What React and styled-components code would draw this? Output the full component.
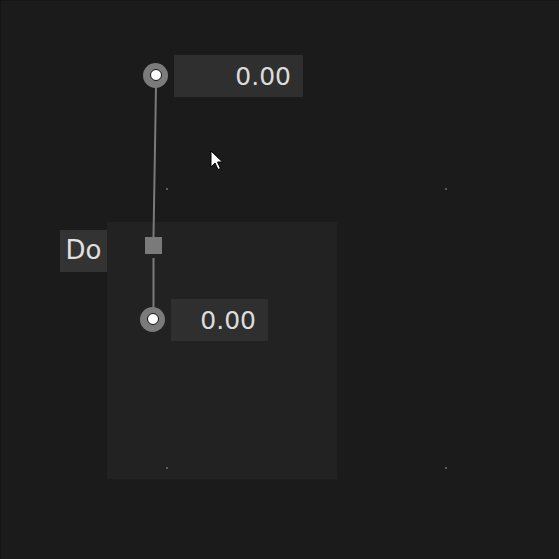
import React from 'react';
import styled, { createGlobalStyle } from 'styled-components';

const Global = createGlobalStyle`
  html, body { margin: 0; padding: 0; background: #1b1b1b; }
  body { font-family: "DejaVu Sans", Verdana, sans-serif; }
`;

const Canvas = styled.div`
  position: relative;
  width: 559px;
  height: 559px;
  overflow: hidden;
  background: #1b1b1b;
  box-shadow: inset 1px 1px 0 #151515;
`;

const Panel = styled.div`
  position: absolute;
  left: ${(p) => p.x}px;
  top: ${(p) => p.y}px;
  width: ${(p) => p.w}px;
  height: ${(p) => p.h}px;
  background: #222222;
`;

const GridDot = styled.div`
  position: absolute;
  left: ${(p) => p.x}px;
  top: ${(p) => p.y}px;
  width: 2px;
  height: 2px;
  background: #5c5c5c;
`;

const Wires = styled.svg`
  position: absolute;
  left: 0;
  top: 0;
  width: 559px;
  height: 559px;
  pointer-events: none;
`;

const Node = styled.div`
  position: absolute;
  left: ${(p) => p.x}px;
  top: ${(p) => p.y}px;
  display: flex;
  align-items: center;
  gap: 6px;
`;

const Port = styled.div`
  width: 25px;
  height: 25px;
  margin-top: ${(p) => p.lift || 0}px;
  border-radius: 50%;
  background: #7b7b7b;
  display: flex;
  align-items: center;
  justify-content: center;

  &::after {
    content: '';
    width: 10px;
    height: 10px;
    border-radius: 50%;
    background: #ffffff;
    border: 1px solid #111111;
  }
`;

const ValueBox = styled.div`
  width: ${(p) => p.w}px;
  height: 42px;
  box-sizing: border-box;
  padding-right: 12px;
  display: flex;
  align-items: center;
  justify-content: flex-end;
  background: #2f2f2f;
  color: #dcdcdc;
  font-size: 25px;
  line-height: 1;
`;

const Label = styled.div`
  position: absolute;
  left: 60px;
  top: 230px;
  width: 47px;
  height: 42px;
  padding-bottom: 3px;
  box-sizing: border-box;
  display: flex;
  align-items: center;
  justify-content: center;
  background: #333333;
  color: #e0e0e0;
  font-size: 26px;
  line-height: 1;
`;

const Cursor = styled.svg`
  position: absolute;
  left: 210px;
  top: 150px;
  width: 14px;
  height: 21px;
  overflow: visible;
`;

const dots = [
  [166, 188],
  [445, 188],
  [166, 467],
  [445, 467],
];

export default function App() {
  return (
    <>
      <Global />
      <Canvas>
        <Panel x={107} y={222} w={230} h={257} />
        {dots.map(([x, y]) => (
          <GridDot key={`${x}-${y}`} x={x} y={y} />
        ))}
        <Wires viewBox="0 0 559 559">
          <line x1={156} y1={86} x2={153.5} y2={237} stroke="#7a7a7a" strokeWidth={2} />
          <line x1={153.5} y1={258} x2={153.5} y2={308} stroke="#7a7a7a" strokeWidth={2} />
          <rect x={145} y={237} width={17} height={17} fill="#7a7a7a" />
        </Wires>
        <Node x={143} y={55}>
          <Port lift={-2} />
          <ValueBox w={129}>0.00</ValueBox>
        </Node>
        <Node x={140} y={299}>
          <Port lift={-2} />
          <ValueBox w={97}>0.00</ValueBox>
        </Node>
        <Label>Do</Label>
        <Cursor viewBox="0 0 14 21">
          <path
            d="M1 1 L1 17 L5 13 L8 19.5 L10.5 18.5 L7.5 12 L12.5 12 Z"
            fill="#ffffff"
            stroke="#000"
            strokeWidth={1}
          />
        </Cursor>
      </Canvas>
    </>
  );
}
